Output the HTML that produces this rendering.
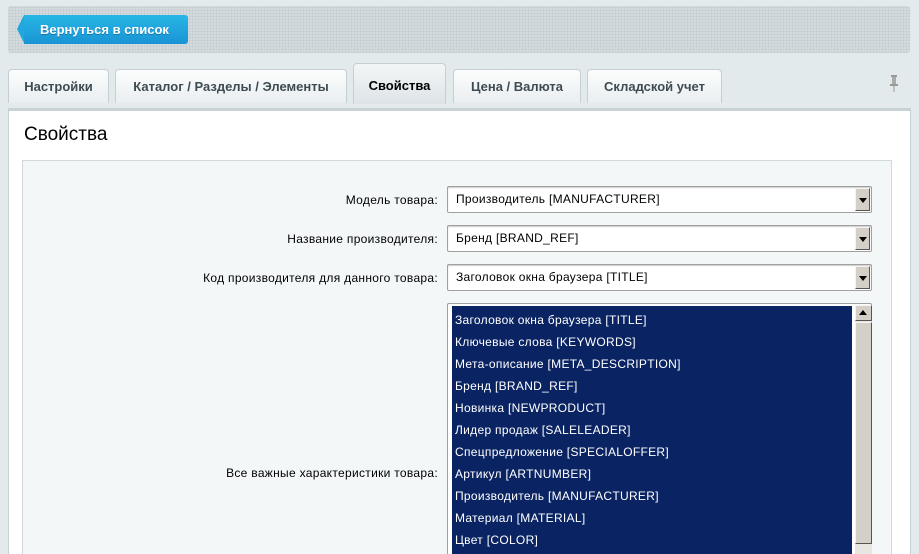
<!DOCTYPE html>
<html style="height:554px;overflow:hidden"><head><meta charset="utf-8"><style>
*{margin:0;padding:0;box-sizing:border-box}
body{width:919px;height:554px;overflow:hidden;background:#e3eaec;font-family:"Liberation Sans",Arial,sans-serif;position:relative}
.top{position:absolute;left:8px;top:6px;width:902px;height:47px;background:#d3dbde;background-image:radial-gradient(#c3cbcf 0.8px,transparent 0.9px);background-size:3px 3px;border-radius:3px;border-bottom:1px solid #c8d0d3}
.btn{position:absolute;left:24px;top:15px;width:164px;height:29px;background:linear-gradient(#27b6e6,#1a94d4);border-radius:0 3px 3px 0;color:#fff;font-weight:bold;font-size:13px;line-height:29px;padding-left:16px;text-shadow:0 1px 0 #1477a8}
.btn:before{content:"";position:absolute;left:-7px;top:0;border-right:7px solid #22a7de;border-top:14.5px solid transparent;border-bottom:14.5px solid transparent}
.tab{position:absolute;top:69px;height:34px;background:linear-gradient(#fcfdfd,#e9eef0);border:1px solid #c5ced2;border-bottom:none;border-radius:4px 4px 0 0;font-size:13px;font-weight:bold;color:#3f4b52;text-align:center;line-height:34px}
.tab.a{top:63px;height:41px;background:linear-gradient(#f3f6f7,#dde4e7);color:#000;line-height:44px}
.panel{position:absolute;left:8px;top:108px;width:903px;height:460px;background:#fff;border:1px solid #c7d0d4;border-top:3px solid #c9d2d6}
h1{position:absolute;left:24px;top:124px;font-size:19px;font-weight:normal;color:#000}
.box{position:absolute;left:22px;top:160px;width:870px;height:420px;background:#f4f7f8;border:1px solid #d2d9dc}
.lbl{position:absolute;right:481px;font-size:12px;letter-spacing:0.3px;color:#000;text-align:right}
.sel{position:absolute;left:447px;width:425px;height:27px;background:#fff;border:1px solid #a0a0a0;border-radius:2px;font-size:12px;letter-spacing:0.3px;line-height:25px;padding-left:8px;box-shadow:inset 0 1px 1px #ccc}
.sel i{position:absolute;right:1px;top:1px;width:15px;height:23px;background:#d4d0c8;border:1px solid;border-color:#f4f3ef #555 #555 #f4f3ef}
.sel i:after{content:"";position:absolute;left:3px;top:9px;border-top:5px solid #000;border-left:4px solid transparent;border-right:4px solid transparent}
.list{position:absolute;left:447px;top:303px;width:425px;height:260px;background:#fff;border:1px solid #a0a0a0;border-radius:2px}
.items{position:absolute;left:4px;top:2px;width:400px;height:260px;background:#0a2463;color:#fff;font-size:12px;letter-spacing:0.3px;padding-top:3px}
.items div{height:22px;line-height:22px;padding-left:3px}
.sb{position:absolute;left:407px;top:1px;width:17px;height:260px;background:#e8e6e0}
.sb .u{position:absolute;left:0;top:0;width:17px;height:16px;background:#d4d0c8;border:1px solid;border-color:#f4f3ef #555 #555 #f4f3ef}
.sb .u:after{content:"";position:absolute;left:3px;top:4px;border-bottom:5px solid #000;border-left:4px solid transparent;border-right:4px solid transparent}
.sb .t{position:absolute;left:0;top:17px;width:17px;height:222px;background:#d4d0c8;border:1px solid;border-color:#f4f3ef #555 #555 #f4f3ef}
</style></head><body>
<div class="top"></div>
<div class="btn">Вернуться в список</div>
<div class="panel"></div>
<div class="tab" style="left:8px;width:101px">Настройки</div>
<div class="tab" style="left:115px;width:232px">Каталог / Разделы / Элементы</div>
<div class="tab a" style="left:353px;width:93px">Свойства</div>
<div class="tab" style="left:453px;width:128px">Цена / Валюта</div>
<div class="tab" style="left:587px;width:135px">Складской учет</div>
<svg style="position:absolute;left:888px;top:75px" width="12" height="18"><rect x="3" y="0" width="6" height="2" fill="#999"/><rect x="4" y="2" width="4" height="7" fill="#aaa"/><rect x="2" y="9" width="8" height="2" fill="#999"/><rect x="5.5" y="11" width="1" height="6" fill="#999"/></svg>
<h1>Свойства</h1>
<div class="box"></div>
<div class="lbl" style="top:193px">Модель товара:</div>
<div class="sel" style="top:186px">Производитель [MANUFACTURER]<i></i></div>
<div class="lbl" style="top:232px">Название производителя:</div>
<div class="sel" style="top:225px">Бренд [BRAND_REF]<i></i></div>
<div class="lbl" style="top:271px">Код производителя для данного товара:</div>
<div class="sel" style="top:264px">Заголовок окна браузера [TITLE]<i></i></div>
<div class="lbl" style="top:466px">Все важные характеристики товара:</div>
<div class="list"><div class="items">
<div>Заголовок окна браузера [TITLE]</div><div>Ключевые слова [KEYWORDS]</div><div>Мета-описание [META_DESCRIPTION]</div><div>Бренд [BRAND_REF]</div><div>Новинка [NEWPRODUCT]</div><div>Лидер продаж [SALELEADER]</div><div>Спецпредложение [SPECIALOFFER]</div><div>Артикул [ARTNUMBER]</div><div>Производитель [MANUFACTURER]</div><div>Материал [MATERIAL]</div><div>Цвет [COLOR]</div><div></div>
</div><div class="sb"><div class="u"></div><div class="t"></div></div></div>
</body></html>
